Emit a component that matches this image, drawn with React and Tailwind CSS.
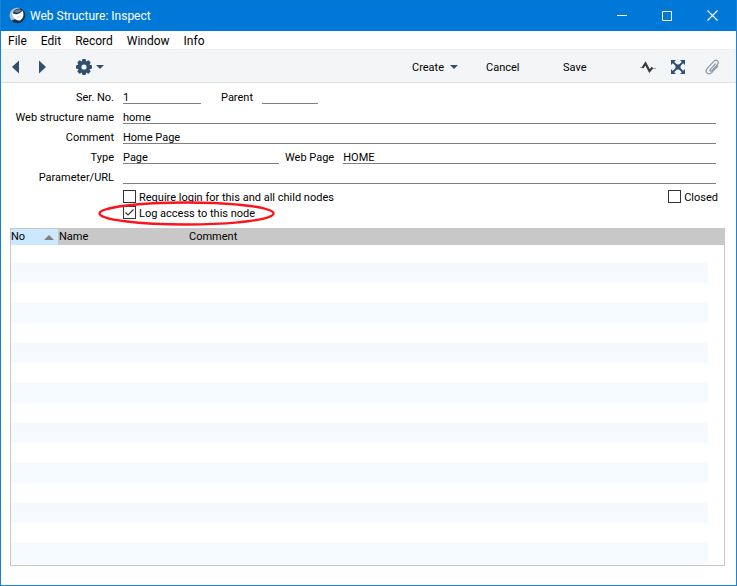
import React, { useState } from 'react';

const menuItems = ['File', 'Edit', 'Record', 'Window', 'Info'];
const rows = Array.from({ length: 16 }, (_, i) => i);

const labelClass = 'h-4 pt-1 leading-3';
const inputClass = 'h-4 min-w-0 border-b border-[#808080] bg-transparent pt-1 outline-none';

function Logo() {
    return (
        <svg width="17" height="17" viewBox="0 0 17 17">
            <circle cx="8.5" cy="8.5" r="7.8" fill="#173247" />
            <path d="M2.6 13.6 C-0.6 10 0 4.4 4 2 C6 0.6 9.6 0.4 11.4 1.2 C7.6 1.6 4.6 3 4.2 5.6 C3.8 8.6 5 10.6 6.4 12 Z" fill="#b4c2cc" />
            <path d="M3.2 5.6 C5.4 8.4 10.8 7.8 13.4 3.6 C15.4 6.8 14.6 11.8 11.2 13.4 C7 14.6 3 10.4 3.2 5.6 Z" fill="#fafcfd" />
            <path d="M5 4.8 C6.4 2.4 10 1.6 12.6 3 C11 5.8 7.6 6.8 5 4.8 Z" fill="#6c8292" />
            <path d="M7 9.2 C9 9.6 11.4 8.8 12.6 7.2 C12.4 9.4 10.6 11 8.8 11 Z" fill="#dbe4ea" />
        </svg>
    );
}

function Gear() {
    return (
        <svg width="16" height="16" viewBox="0 0 16 16" fill="#30506e">
            {[0, 45, 90, 135].map((angle) => (
                <rect key={angle} x="6" y="0" width="4" height="16" rx="1.2" transform={`rotate(${angle} 8 8)`} />
            ))}
            <circle cx="8" cy="8" r="6.2" />
            <circle cx="8" cy="8" r="2.6" fill="#f4f5f7" />
        </svg>
    );
}

function Caret() {
    return (
        <svg width="8" height="4" viewBox="0 0 8 4" fill="#30506e">
            <path d="M0 0H8L4 4Z" />
        </svg>
    );
}

function TitleBar() {
    return (
        <header className="flex h-[31px] items-center bg-[#0078d7] pl-2 text-[12px] text-white">
            <Logo />
            <h1 className="ml-1">Web Structure: Inspect</h1>
            <div className="ml-auto flex h-full">
                <button aria-label="Minimize" className="flex w-[45px] items-center justify-center">
                    <svg width="10" height="10" stroke="white"><path d="M0 4.5H10" /></svg>
                </button>
                <button aria-label="Maximize" className="flex w-[45px] items-center justify-center">
                    <svg width="10" height="10" fill="none" stroke="white"><path d="M0.5 0.5H9.5V9.5H0.5Z" /></svg>
                </button>
                <button aria-label="Close" className="flex w-[47px] items-center justify-center">
                    <svg width="11" height="11" stroke="white" strokeWidth="1.1"><path d="M0.5 0.5L10.5 10.5M10.5 0.5L0.5 10.5" /></svg>
                </button>
            </div>
        </header>
    );
}

function Toolbar() {
    return (
        <div className="flex h-[34px] items-center border-t border-b border-t-[#eeeeef] border-b-[#dcdfe2] bg-[#f4f5f7] pt-[1px] pr-4 pl-[11px]">
            <button aria-label="Previous">
                <svg width="7" height="14" fill="#30506e"><path d="M7 0.5V13.5L0 7Z" /></svg>
            </button>
            <button aria-label="Next" className="ml-5">
                <svg width="7" height="14" fill="#30506e"><path d="M0 0.5V13.5L7 7Z" /></svg>
            </button>
            <button aria-label="Options" className="ml-[30px] flex items-center gap-1">
                <Gear />
                <Caret />
            </button>
            <div className="ml-auto flex items-center">
                <button className="flex w-[74px] items-center gap-[6px]">
                    <span className="pt-[2px]">Create</span>
                    <Caret />
                </button>
                <button className="w-[77px] pt-[2px] text-left">Cancel</button>
                <button className="w-[77px] pt-[2px] text-left">Save</button>
                <button aria-label="Activity">
                    <svg width="16" height="14" viewBox="0 0 16 14" fill="none">
                        <path d="M0 7.5H3M12.5 8.5H16" stroke="#a5a8ac" />
                        <path d="M2.5 8L5.5 3.5L9.5 11L12.5 7.5" stroke="#3a3a3a" strokeWidth="2.2" />
                    </svg>
                </button>
                <button aria-label="Links" className="ml-[15px]">
                    <svg width="14" height="14" viewBox="0 0 14 14" fill="#30506e">
                        <path d="M2 2L12 12M12 2L2 12" stroke="#30506e" strokeWidth="1.8" />
                        <path d="M0 0H5L0 5ZM14 0V5L9 0ZM0 14V9L5 14ZM14 14H9L14 9Z" />
                        <rect x="4.5" y="4.5" width="5" height="5" />
                    </svg>
                </button>
                <button aria-label="Attachments" className="ml-5">
                    <svg width="15" height="16" viewBox="0 0 15 16" fill="none" stroke="#8d99a6" strokeWidth="1.2" strokeLinecap="round">
                        <path d="M10.3 5L5.2 10.6C4.3 11.7 5.6 12.8 6.6 11.8L12.3 5.6C14.8 2.6 11.4 -0.4 8.8 2.3L2.4 9.1C-1.1 13.1 3.4 17 6.9 13.4L12.8 7" />
                    </svg>
                </button>
            </div>
        </div>
    );
}

function Field({ id, label, value, onChange, className }) {
    return (
        <>
            <label htmlFor={id} className={`${labelClass} w-[113px] shrink-0 text-right`}>{label}</label>
            <input id={id} value={value} onChange={onChange} className={`${inputClass} ml-[9px] ${className}`} />
        </>
    );
}

function Checkbox({ id, label, checked, onChange }) {
    return (
        <span className="flex h-4 items-start gap-[3px] pt-[1px]">
            <span className="relative flex">
                <input
                    id={id}
                    type="checkbox"
                    checked={checked}
                    onChange={onChange}
                    className="size-[13px] appearance-none border border-[#333333] bg-white"
                />
                {checked && (
                    <svg width="13" height="13" className="pointer-events-none absolute inset-0" fill="none" stroke="#333333" strokeWidth="1.2">
                        <path d="M2.5 6.5L5 9L10.5 3.5" />
                    </svg>
                )}
            </span>
            <label htmlFor={id}>{label}</label>
        </span>
    );
}

function App() {
    const [record, setRecord] = useState({
        serNo: '1',
        parent: '',
        name: 'home',
        comment: 'Home Page',
        type: 'Page',
        webPage: 'HOME',
        parameter: '',
        requireLogin: false,
        logAccess: true,
        closed: false,
    });

    const text = (key) => (e) => setRecord({ ...record, [key]: e.target.value });
    const toggle = (key) => () => setRecord({ ...record, [key]: !record[key] });

    return (
        <div className="min-h-screen border border-t-0 border-[#1883d7] bg-white font-['Roboto',sans-serif] text-[11px] leading-4 text-black">
            <TitleBar />
            <nav className="flex h-[18px] items-center gap-[14px] pt-[2px] pl-[7px] text-[12px]">
                {menuItems.map((item) => (
                    <button key={item}>{item}</button>
                ))}
            </nav>
            <Toolbar />

            <form className="pt-[5px]">
                <div className="flex flex-col gap-1 pr-5">
                    <div className="flex">
                        <Field id="serNo" label="Ser. No." value={record.serNo} onChange={text('serNo')} className="w-[78px]" />
                        <label htmlFor="parent" className={`${labelClass} ml-5`}>Parent</label>
                        <input id="parent" value={record.parent} onChange={text('parent')} className={`${inputClass} ml-[9px] w-14`} />
                    </div>
                    <div className="flex">
                        <Field id="name" label="Web structure name" value={record.name} onChange={text('name')} className="flex-1" />
                    </div>
                    <div className="flex">
                        <Field id="comment" label="Comment" value={record.comment} onChange={text('comment')} className="flex-1" />
                    </div>
                    <div className="flex">
                        <Field id="type" label="Type" value={record.type} onChange={text('type')} className="w-[156px]" />
                        <label htmlFor="webPage" className={`${labelClass} ml-[6px]`}>Web Page</label>
                        <input id="webPage" value={record.webPage} onChange={text('webPage')} className={`${inputClass} ml-[9px] flex-1`} />
                    </div>
                    <div className="flex">
                        <Field id="parameter" label="Parameter/URL" value={record.parameter} onChange={text('parameter')} className="flex-1" />
                    </div>
                </div>
                <div className="flex justify-between pt-[5px] pr-[18px] pl-[122px]">
                    <div>
                        <Checkbox id="requireLogin" label="Require login for this and all child nodes" checked={record.requireLogin} onChange={toggle('requireLogin')} />
                        <div className="relative">
                            <Checkbox id="logAccess" label="Log access to this node" checked={record.logAccess} onChange={toggle('logAccess')} />
                            <svg width="178" height="26" className="pointer-events-none absolute -top-1 -left-[25px]" fill="none" stroke="#f9141e" strokeWidth="2.4">
                                <ellipse cx="88.5" cy="12.5" rx="87" ry="11" />
                            </svg>
                        </div>
                    </div>
                    <Checkbox id="closed" label="Closed" checked={record.closed} onChange={toggle('closed')} />
                </div>
            </form>

            <div className="mt-[7px] mr-[11px] mb-[19px] ml-[9px] border border-[#c8c8c8] pb-[2px]">
                <table className="w-full table-fixed border-collapse text-left">
                    <thead>
                        <tr className="h-4 bg-[#c8c8c8]">
                            <th className="w-[47px] bg-[#cce8ff] p-0 font-normal">
                                <span className="flex items-center justify-between pr-1">
                                    No
                                    <svg width="10" height="5" fill="#808080"><path d="M0 5H10L5 0Z" /></svg>
                                </span>
                            </th>
                            <th className="w-[130px] p-0 pl-[1px] font-normal">Name</th>
                            <th className="p-0 pl-[1px] font-normal">Comment</th>
                            <th className="w-4 p-0"></th>
                        </tr>
                    </thead>
                    <tbody>
                        {rows.map((row) => (
                            <tr key={row} className={row === 0 ? 'h-[18px]' : 'h-5'}>
                                <td colSpan={3} className={row % 2 === 1 ? 'bg-[#f4faff] p-0' : 'p-0'}></td>
                                <td className="p-0"></td>
                            </tr>
                        ))}
                    </tbody>
                </table>
            </div>
        </div>
    );
}

export default App;
